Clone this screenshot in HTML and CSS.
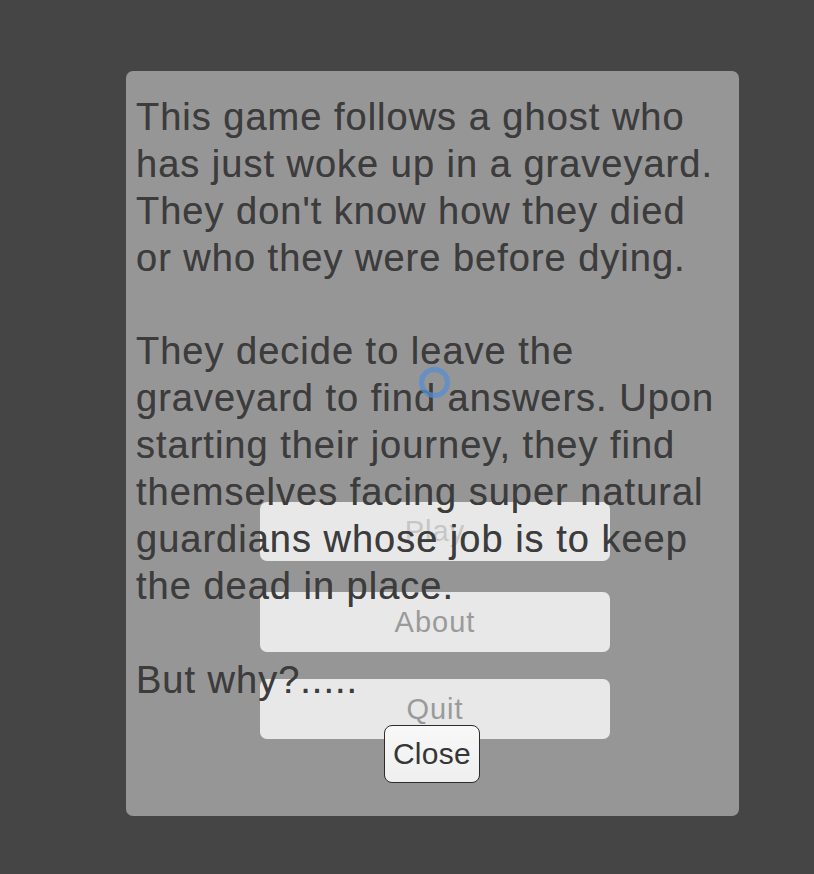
FILE: index.html
```html
<!DOCTYPE html>
<html>
<head>
<meta charset="utf-8">
<link rel="stylesheet" href="styles.css">
</head>
<body>
<div class="panel">
  <div class="menu">
    <div class="menu-btn menu-btn-play">Play</div>
    <div class="menu-btn menu-btn-about">About</div>
    <div class="menu-btn menu-btn-quit">Quit</div>
  </div>
  <div class="story">
    <div class="line">This game follows a ghost who</div>
    <div class="line">has just woke up in a graveyard.</div>
    <div class="line">They don't know how they died</div>
    <div class="line">or who they were before dying.</div>
    <div class="line blank"></div>
    <div class="line">They decide to leave the</div>
    <div class="line">graveyard to find answers. Upon</div>
    <div class="line">starting their journey, they find</div>
    <div class="line">themselves facing super natural</div>
    <div class="line">guardians whose job is to keep</div>
    <div class="line">the dead in place.</div>
    <div class="line blank"></div>
    <div class="line">But why?.....</div>
  </div>
  <div class="close-btn">Close</div>
  <div class="cursor-ring"></div>
</div>
</body>
</html>
```
FILE: styles.css
```css
html, body {
  margin: 0;
  padding: 0;
}
body {
  background: #454545;
  width: 814px;
  height: 874px;
  padding: 71px 0 0 126px;
  box-sizing: border-box;
  overflow: hidden;
  font-family: "Liberation Sans", Arial, sans-serif;
}
.panel {
  position: relative;
  display: grid;
  width: 613px;
  height: 745px;
  background: #969696;
  border-radius: 7px;
}
.panel > .menu,
.panel > .story,
.panel > .close-btn {
  grid-area: 1 / 1;
}
.menu {
  z-index: 1;
  display: flex;
  flex-direction: column;
  align-items: flex-start;
  padding-left: 134px;
  padding-top: 431px;
}
.menu-btn {
  width: 350px;
  height: 60px;
  background: #e8e8e8;
  border-radius: 7px;
  display: flex;
  align-items: center;
  justify-content: center;
  font-size: 29px;
  letter-spacing: 1px;
  color: #9a9a9a;
}
.menu-btn-play {
  height: 59px;
  color: #c6c6c6;
}
.menu-btn-about {
  margin-top: 31px;
}
.menu-btn-quit {
  margin-top: 27px;
}
.story {
  z-index: 2;
  padding: 23px 0 0 10px;
  font-size: 38px;
  line-height: 46.9px;
  letter-spacing: 1px;
  color: #3c3c3c;
  text-shadow: 0 0 0.6px rgba(60, 60, 60, 0.6);
}
.line {
  white-space: nowrap;
  height: 46.9px;
}
.close-btn {
  z-index: 3;
  align-self: end;
  justify-self: start;
  margin: 0 0 33px 258px;
  width: 96px;
  height: 58px;
  box-sizing: border-box;
  border: 1px solid #2c2c2c;
  border-radius: 8px;
  background: linear-gradient(#f8f8f8, #efefef);
  display: flex;
  align-items: center;
  justify-content: center;
  font-size: 30px;
  letter-spacing: 0.3px;
  color: #363636;
}
.cursor-ring {
  position: absolute;
  z-index: 4;
  left: 293px;
  top: 296px;
  width: 31px;
  height: 31px;
  box-sizing: border-box;
  border: 5px solid rgba(85, 140, 210, 0.75);
  border-radius: 50%;
  filter: blur(0.7px);
}
```
